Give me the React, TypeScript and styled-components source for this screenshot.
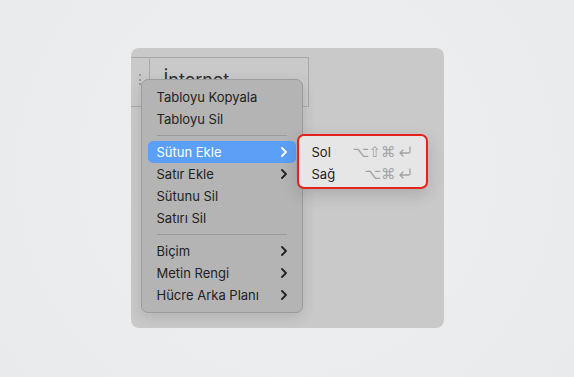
import React from "react";
import styled, { createGlobalStyle } from "styled-components";

const GlobalStyle = createGlobalStyle`
  html, body {
    margin: 0;
    padding: 0;
    background: #ebecee;
  }
  body {
    font-family: Inter, "Liberation Sans", sans-serif;
    -webkit-font-smoothing: antialiased;
  }
`;

const Page = styled.main`
  width: 574px;
  height: 377px;
  display: flex;
  align-items: center;
  justify-content: center;
  background: radial-gradient(circle at 50% 45%, #eeeff1 0%, #e9eaec 100%);
`;

const Card = styled.section`
  position: relative;
  width: 313px;
  height: 280px;
  margin-top: -2px;
  box-sizing: border-box;
  padding-top: 9px;
  background: #c9c9c9;
  border-radius: 8px;
`;

const TableRow = styled.div`
  display: flex;
  width: 178px;
  border-top: 1px solid #a9a9a9;
  border-bottom: 1px solid #a9a9a9;
`;

const Handle = styled.div`
  width: 18px;
  display: flex;
  flex-direction: column;
  align-items: center;
  justify-content: center;
  gap: 2.5px;
  padding-bottom: 4px;
`;

const Dot = styled.span`
  width: 2px;
  height: 2px;
  border-radius: 50%;
  background: #8c8c8c;
`;

const Cell = styled.div`
  flex: 1;
  height: 48px;
  box-sizing: border-box;
  padding: 11px 0 0 14px;
  border-left: 1px solid #a9a9a9;
  border-right: 1px solid #a9a9a9;
  font-size: 18px;
  color: #303030;
`;

const Menu = styled.ul`
  position: absolute;
  left: 10px;
  top: 31px;
  width: 162px;
  margin: 0;
  box-sizing: border-box;
  padding: 6px 6px 6px;
  list-style: none;
  background: #b4b4b4;
  border: 1px solid #9c9c9c;
  border-radius: 7px;
  box-shadow: 0 4px 14px rgba(0, 0, 0, 0.12);
`;

const Item = styled.li<{ $active?: boolean }>`
  height: 22px;
  display: flex;
  align-items: center;
  justify-content: space-between;
  padding: 0 9px 0 9px;
  border-radius: 5px;
  font-size: 13px;
  color: ${(p) => (p.$active ? "#ffffff" : "#222222")};
  background: ${(p) => (p.$active ? "#5b9ff6" : "transparent")};
`;

const Separator = styled.li`
  height: 1px;
  margin: 5px 9px 5px 9px;
  background: #9a9a9a;
`;

const SubMenu = styled.ul`
  position: absolute;
  left: 166px;
  top: 86px;
  width: 131px;
  margin: 0;
  box-sizing: border-box;
  padding: 5px 0 2px;
  list-style: none;
  background: #e6e6e6;
  border: 2px solid #e5221b;
  border-radius: 7px;
  box-shadow: 0 6px 16px rgba(0, 0, 0, 0.15);
`;

const SubItem = styled.li`
  height: 22px;
  display: flex;
  align-items: center;
  justify-content: space-between;
  padding: 0 15px 0 13px;
  font-size: 13px;
  color: #222222;
`;

const Shortcut = styled.span`
  display: flex;
  align-items: center;
  gap: 2px;
  font-family: "DejaVu Sans", sans-serif;
  font-size: 14.5px;
  color: #a3a3a3;
`;

const Chevron = ({ color }: { color: string }) => (
  <svg width="6" height="10" viewBox="0 0 6 10">
    <polyline
      points="1,1 5,5 1,9"
      fill="none"
      stroke={color}
      strokeWidth="1.8"
      strokeLinecap="round"
      strokeLinejoin="round"
    />
  </svg>
);

const ReturnKey = () => (
  <svg width="13" height="11" viewBox="0 0 13 11">
    <path
      d="M12 1 V5.5 Q12 7 10.5 7 H2 M5 4 L2 7 L5 10"
      fill="none"
      stroke="#a3a3a3"
      strokeWidth="1.3"
      strokeLinecap="round"
      strokeLinejoin="round"
    />
  </svg>
);

type Entry = { label: string; sub?: boolean; active?: boolean } | "sep";

const entries: Entry[] = [
  { label: "Tabloyu Kopyala" },
  { label: "Tabloyu Sil" },
  "sep",
  { label: "Sütun Ekle", sub: true, active: true },
  { label: "Satır Ekle", sub: true },
  { label: "Sütunu Sil" },
  { label: "Satırı Sil" },
  "sep",
  { label: "Biçim", sub: true },
  { label: "Metin Rengi", sub: true },
  { label: "Hücre Arka Planı", sub: true },
];

export default function App() {
  return (
    <>
      <GlobalStyle />
      <Page>
        <Card>
          <TableRow>
            <Handle>
              <Dot />
              <Dot />
              <Dot />
            </Handle>
            <Cell>İnternet</Cell>
          </TableRow>

          <Menu>
            {entries.map((e, i) =>
              e === "sep" ? (
                <Separator key={i} />
              ) : (
                <Item key={i} $active={e.active}>
                  <span>{e.label}</span>
                  {e.sub && <Chevron color={e.active ? "#ffffff" : "#222222"} />}
                </Item>
              )
            )}
          </Menu>

          <SubMenu>
            <SubItem>
              <span>Sol</span>
              <Shortcut>
                ⌥⇧⌘
                <ReturnKey />
              </Shortcut>
            </SubItem>
            <SubItem>
              <span>Sağ</span>
              <Shortcut>
                ⌥⌘
                <ReturnKey />
              </Shortcut>
            </SubItem>
          </SubMenu>
        </Card>
      </Page>
    </>
  );
}
